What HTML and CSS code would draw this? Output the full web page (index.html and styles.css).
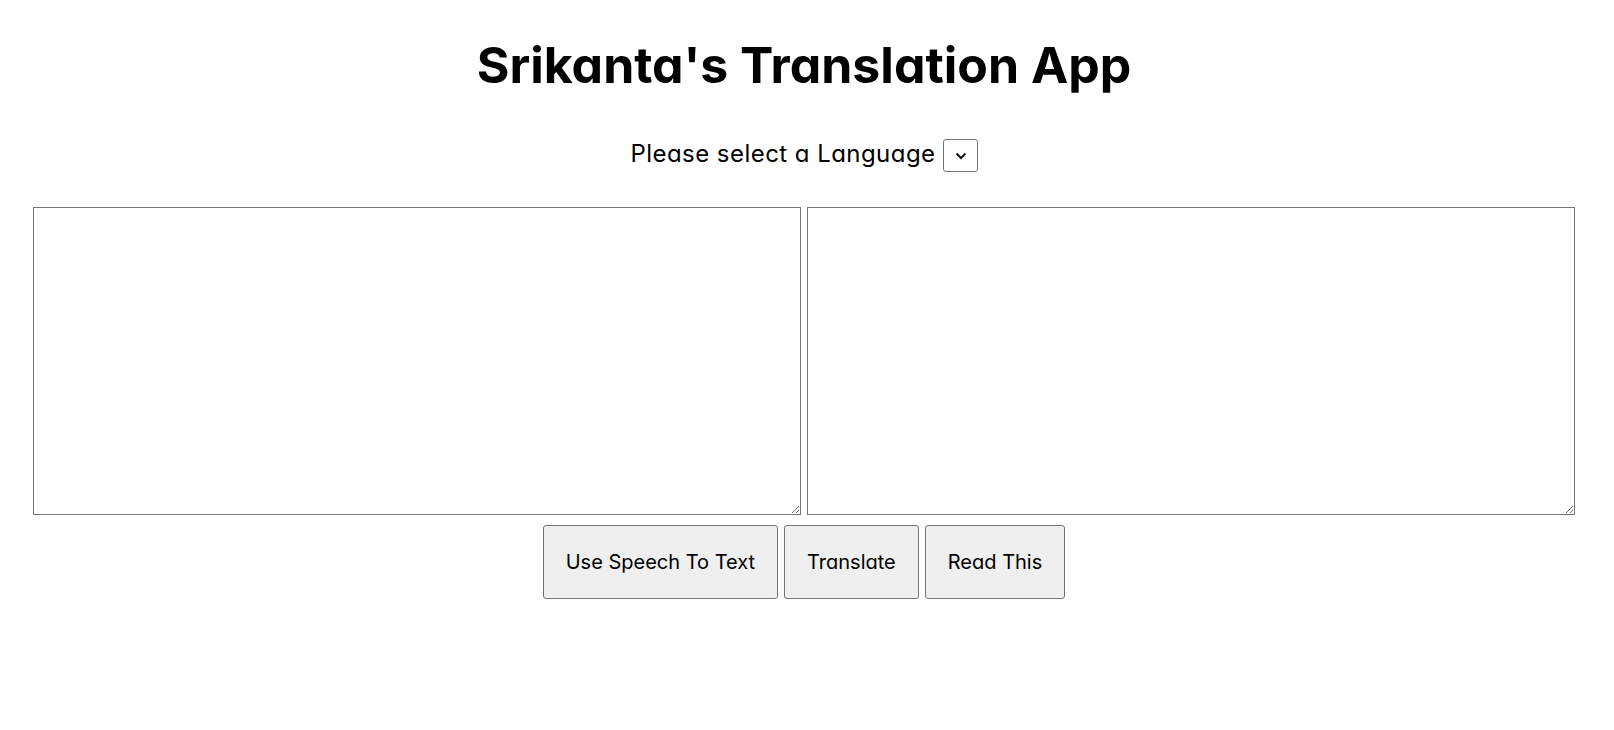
FILE: index.html
```html
<!DOCTYPE html>
<html lang="en">
<head>
<meta charset="utf-8">
<title>Srikanta's Translation App</title>
<link rel="stylesheet" href="styles.css">
</head>
<body>
<main class="app">
  <h1 class="title">Srikanta's Translation App</h1>
  <div class="lang-row">
    <label class="lang-label" for="lang">Please select a Language</label>
    <select class="lang-select" id="lang"></select>
  </div>
  <div class="editors">
    <textarea class="editor"></textarea>
    <textarea class="editor"></textarea>
  </div>
  <div class="actions">
    <button class="btn btn-speech">Use Speech To Text</button>
    <button class="btn btn-translate">Translate</button>
    <button class="btn btn-read">Read This</button>
  </div>
</main>
</body>
</html>
```

FILE: styles.css
```css
html, body {
  margin: 0;
  padding: 0;
  background: #ffffff;
}

body {
  font-family: "Inter", "Open Sans", sans-serif;
  font-feature-settings: "cv11" 1;
  color: #000000;
}

.app {
  width: 1542px;
  margin-left: 33px;
  display: flex;
  flex-direction: column;
  align-items: center;
}

.title {
  margin: 40px 0 0 0;
  font-size: 50px;
  line-height: 50px;
  font-weight: 700;
  letter-spacing: 0;
  text-align: center;
}

.lang-row {
  margin-top: 49px;
  display: flex;
  align-items: center;
  gap: 7px;
  height: 33px;
}

.lang-label {
  font-size: 24px;
  line-height: 33px;
  letter-spacing: 0.45px;
  padding-bottom: 5px;
}

.lang-select {
  appearance: none;
  -webkit-appearance: none;
  width: 35px;
  height: 33px;
  margin: 0;
  padding: 0;
  border: 1px solid #767676;
  border-radius: 3px;
  background-color: #ffffff;
  background-image: url("data:image/svg+xml,%3Csvg xmlns='http://www.w3.org/2000/svg' width='12' height='8' viewBox='0 0 12 8'%3E%3Cpath d='M1.5 1.5 6 6 10.5 1.5' fill='none' stroke='%23111' stroke-width='2'/%3E%3C/svg%3E");
  background-repeat: no-repeat;
  background-position: 11px 12px;
}

.editors {
  margin-top: 35px;
  display: flex;
  gap: 6px;
  width: 100%;
}

.editor {
  box-sizing: border-box;
  width: 768px;
  height: 308px;
  margin: 0;
  padding: 2px;
  border: 1px solid #767676;
  font-family: "Inter", sans-serif;
  font-size: 16px;
}

.actions {
  margin-top: 10px;
  display: flex;
  gap: 6px;
}

.btn {
  box-sizing: border-box;
  height: 74px;
  margin: 0;
  padding: 0 22px;
  border: 1px solid #767676;
  border-radius: 3px;
  background: #efefef;
  color: #000000;
  font-family: "Inter", sans-serif;
  font-feature-settings: "cv11" 1;
  font-size: 20px;
  font-weight: 400;
  cursor: pointer;
}
```
